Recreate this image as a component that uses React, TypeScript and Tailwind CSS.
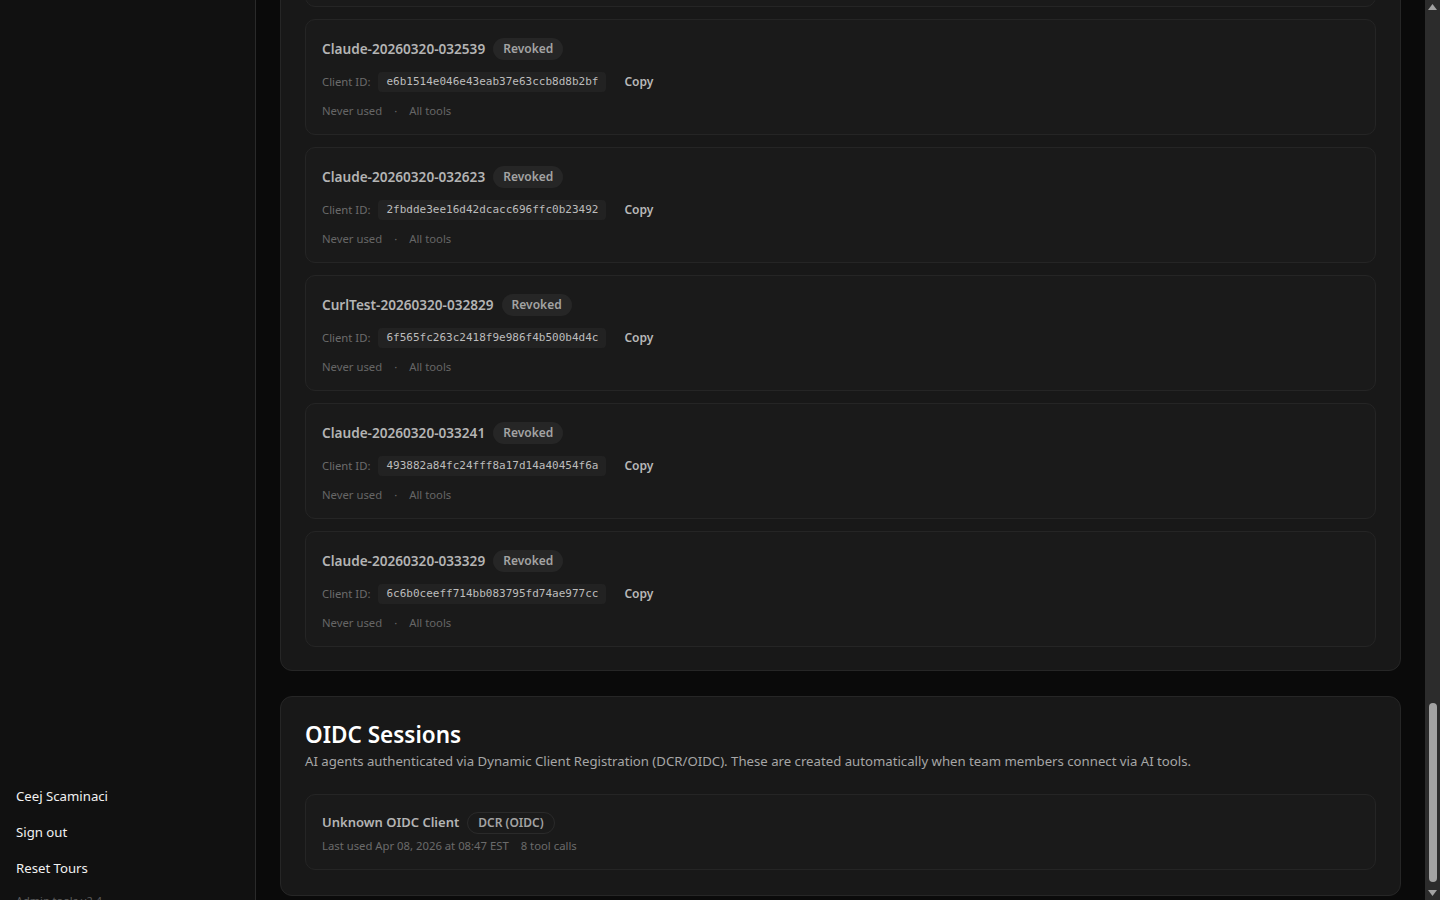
import { ReactNode } from 'react';

type Client = {
  name: string;
  clientId: string;
};

const clients: Client[] = [
  { name: 'Claude-20260320-031957', clientId: '1d0a7c5e9b3f4c28a6e1f0b7d2c94e53' },
  { name: 'Claude-20260320-032539', clientId: 'e6b1514e046e43eab37e63ccb8d8b2bf' },
  { name: 'Claude-20260320-032623', clientId: '2fbdde3ee16d42dcacc696ffc0b23492' },
  { name: 'CurlTest-20260320-032829', clientId: '6f565fc263c2418f9e986f4b500b4d4c' },
  { name: 'Claude-20260320-033241', clientId: '493882a84fc24fff8a17d14a40454f6a' },
  { name: 'Claude-20260320-033329', clientId: '6c6b0ceeff714bb083795fd74ae977cc' },
];

function Badge({ children }: { children: ReactNode }) {
  return (
    <span className="inline-flex h-[22px] items-center rounded-full bg-[#262626] px-[10px] text-[12px] font-semibold text-[#a3a3a3]">
      {children}
    </span>
  );
}

function ClientCard({ client }: { client: Client }) {
  return (
    <div className="rounded-[10px] border border-[#252525] bg-[#1a1a1a] px-4 pt-[18px] pb-[14px]">
      <div className="flex items-center gap-2">
        <span className="text-[13.6px] font-semibold text-[#b4b4b4]">{client.name}</span>
        <Badge>Revoked</Badge>
      </div>
      <div className="mt-[12px] flex items-center">
        <span className="text-[11.3px] text-[#6b6b6b]">Client ID:</span>
        <code className="ml-2 rounded-[4px] bg-[#222222] px-2 py-[2px] font-['DejaVu_Sans_Mono',monospace] text-[11px] leading-[16px] text-[#bdbdbd]">
          {client.clientId}
        </code>
        <button className="ml-[18px] text-[12px] font-semibold text-[#b8b8b8]">Copy</button>
      </div>
      <div className="mt-[11px] flex items-center text-[11.3px] text-[#666666]">
        <span>Never used</span>
        <span className="mx-[12px]">·</span>
        <span>All tools</span>
      </div>
    </div>
  );
}

function Sidebar() {
  return (
    <aside className="flex w-[256px] shrink-0 flex-col justify-end border-r border-[#2a2a2a] bg-[#111111] pl-4">
      <div className="flex flex-col text-[13.2px] text-[#f2f2f2]">
        <a className="h-9 leading-[36px]">Ceej Scaminaci</a>
        <a className="h-9 leading-[36px]">Sign out</a>
        <a className="h-9 leading-[36px]">Reset Tours</a>
        <span className="-mb-[8px] h-[22px] text-[11px] leading-[30px] text-[#5a5a5a]">Admin tools v2.4</span>
      </div>
    </aside>
  );
}

function Scrollbar() {
  return (
    <div className="flex w-[15px] shrink-0 flex-col items-center bg-[#2c2c2c] py-[3px]">
      <svg width="9" height="6" viewBox="0 0 9 6" className="mt-[1px]">
        <path d="M4.5 0L9 6H0z" fill="#a3a3a3" />
      </svg>
      <div className="flex-1" />
      <div className="mb-[8px] h-[179px] w-[8px] rounded-full bg-[#a3a3a3]" />
      <svg width="9" height="6" viewBox="0 0 9 6" className="mb-[1px]">
        <path d="M0 0H9L4.5 6z" fill="#a3a3a3" />
      </svg>
    </div>
  );
}

export default function App() {
  return (
    <div className="flex h-screen overflow-hidden bg-[#0a0a0a] font-['Noto_Sans',sans-serif]">
      <Sidebar />
      <main className="flex min-w-0 flex-1 flex-col justify-end overflow-hidden px-6 pb-[4px]">
        <section className="rounded-xl border border-[#262626] bg-[#181818] px-6 pt-6 pb-[23px]">
          <div className="flex flex-col gap-3">
            {clients.map((c) => (
              <ClientCard key={c.name} client={c} />
            ))}
          </div>
        </section>

        <section className="mt-[25px] rounded-xl border border-[#262626] bg-[#181818] px-6 pt-[22px] pb-[25px]">
          <h2 className="text-[22.5px] font-semibold leading-[32px] text-white">OIDC Sessions</h2>
          <p className="text-[13.2px] leading-[20px] text-[#a6a6a6]">
            AI agents authenticated via Dynamic Client Registration (DCR/OIDC). These are created automatically when team members connect via AI tools.
          </p>
          <div className="mt-[23px] rounded-[10px] border border-[#252525] bg-[#1a1a1a] px-4 pt-[17px] pb-[14px]">
            <div className="flex items-center gap-2">
              <span className="text-[13px] font-semibold text-[#b4b4b4]">Unknown OIDC Client</span>
              <span className="inline-flex h-[22px] items-center rounded-full border border-[#2a2a2a] px-[10px] text-[12px] font-semibold text-[#a3a3a3]">
                DCR (OIDC)
              </span>
            </div>
            <div className="mt-[4px] flex gap-3 text-[11.3px] text-[#6b6b6b]">
              <span>Last used Apr 08, 2026 at 08:47 EST</span>
              <span>8 tool calls</span>
            </div>
          </div>
        </section>
      </main>
      <Scrollbar />
    </div>
  );
}
